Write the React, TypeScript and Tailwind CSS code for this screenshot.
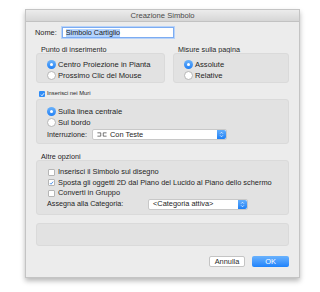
import type { ReactNode } from 'react';

const font = { fontFamily: '"Liberation Sans", Arial, sans-serif' };

function Radio({ checked, label }: { checked?: boolean; label: string }) {
  return (
    <div className="flex h-[11px] items-center gap-[2px]">
      {checked ? (
        <span className="flex h-[9px] w-[9px] items-center justify-center rounded-full bg-gradient-to-b from-[#6cb3fa] to-[#1b7ff5]">
          <span className="h-[3px] w-[3px] rounded-full bg-white" />
        </span>
      ) : (
        <span className="h-[9px] w-[9px] rounded-full border border-[#b5b5b5] bg-white" />
      )}
      <span className="text-[7.6px] leading-none text-[#1e1e1e]">{label}</span>
    </div>
  );
}

function Check({ checked, label }: { checked?: boolean; label: string }) {
  return (
    <div className="flex items-center gap-[3px]">
      <span className="flex h-[7px] w-[7px] items-center justify-center rounded-[1px] border border-[#b5b5b5] bg-white">
        {checked ? (
          <svg viewBox="0 0 8 8" className="h-[6px] w-[6px]">
            <path d="M1.5 4.2 3.2 6 6.6 1.8" fill="none" stroke="#2f7fe8" strokeWidth="1.3" />
          </svg>
        ) : null}
      </span>
      <span className="text-[7.4px] leading-none text-[#1e1e1e]">{label}</span>
    </div>
  );
}

function Select({ width, children }: { width: string; children: ReactNode }) {
  return (
    <div className={`flex h-[11px] items-stretch rounded-[2px] border border-[#c8c8c8] bg-white ${width}`}>
      <div className="flex flex-1 items-center gap-[3px] pl-[4px] text-[7.4px] leading-none text-[#1e1e1e]">{children}</div>
      <div className="flex w-[9px] items-center justify-center rounded-r-[2px] bg-gradient-to-b from-[#62aefc] to-[#1a7ff5]">
        <svg viewBox="0 0 6 9" className="h-[7px] w-[5px]">
          <path d="M1.2 3.4 3 1.6 4.8 3.4M1.2 5.6 3 7.4 4.8 5.6" fill="none" stroke="#fff" strokeWidth="0.9" />
        </svg>
      </div>
    </div>
  );
}

function Box({ className, children }: { className?: string; children?: ReactNode }) {
  return <div className={`rounded-[3px] border border-[#dadada] bg-[#e2e2e2] ${className ?? ''}`}>{children}</div>;
}

export default function App() {
  return (
    <div className="h-[292px] w-[320px] overflow-hidden bg-white pt-[9px]" style={font}>
      <div className="ml-[25px] w-[275px] border border-[#c4c4c4] bg-[#ececec] shadow-[0_3px_5px_rgba(0,0,0,0.28)]">
        <div className="flex h-[12px] items-center justify-center border-b border-[#c2c2c2] bg-gradient-to-b from-[#ececec] to-[#d6d6d6] text-[7.6px] leading-none text-[#4a4a4a]">
          Creazione Simbolo
        </div>

        <div className="px-[10px] pb-[10px]">
          <div className="mt-[5px] flex h-[11px] items-center gap-[5px] -ml-px">
            <span className="text-[7.4px] leading-none text-[#1e1e1e]">Nome:</span>
            <div className="flex h-[11px] w-[112px] items-center border-[1.5px] border-[#7cacf2] bg-white pl-[3px] shadow-[0_0_0_1px_#b7d2f8]">
              <span className="bg-[#b3d3fd] text-[7.2px] leading-[8px] text-[#1e1e1e]">Simbolo Cartiglio</span>
            </div>
          </div>

          <div className="mt-[8px] flex gap-[8px]">
            <div className="flex w-[129px] flex-col">
              <div className="h-[7px] pl-[5px] text-[7.2px] leading-[7px] text-[#1e1e1e]">Punto di inserimento</div>
              <Box className="h-[30px] pl-[10px] pt-[5px]">
                <Radio checked label="Centro Proiezione in Pianta" />
                <Radio label="Prossimo Clic del Mouse" />
              </Box>
            </div>
            <div className="flex flex-1 flex-col">
              <div className="h-[7px] pl-[5px] text-[7.2px] leading-[7px] text-[#1e1e1e]">Misure sulla pagina</div>
              <Box className="h-[30px] pl-[10px] pt-[5px]">
                <Radio checked label="Assolute" />
                <Radio label="Relative" />
              </Box>
            </div>
          </div>

          <div className="mt-[6px] flex h-[10px] items-center pl-[3px]">
            <div className="flex items-center gap-[2px]">
              <span className="flex h-[6px] w-[6px] items-center justify-center rounded-[1px] bg-[#2f8cf6]">
                <svg viewBox="0 0 8 8" className="h-[5px] w-[5px]">
                  <path d="M1.5 4.2 3.2 6 6.6 1.8" fill="none" stroke="#fff" strokeWidth="1.4" />
                </svg>
              </span>
              <span className="text-[5.8px] leading-none text-[#1e1e1e]">Inserisci nei Muri</span>
            </div>
          </div>

          <Box className="h-[45px] pl-[10px] pt-[6px]">
            <Radio checked label="Sulla linea centrale" />
            <Radio label="Sul bordo" />
            <div className="mt-[1px] flex h-[11px] items-center">
              <span className="w-[45px] text-[7.2px] leading-none text-[#1e1e1e]">Interruzione:</span>
              <Select width="w-[135px]">
                <svg viewBox="0 0 12 6" className="h-[5px] w-[10px]">
                  <path d="M0.5 1H4.5V5H0.5M11.5 1H7.5V5H11.5" fill="none" stroke="#333" strokeWidth="0.8" />
                </svg>
                <span>Con Teste</span>
              </Select>
            </div>
          </Box>

          <div className="mt-[9px] h-[7px] pl-[5px] text-[7.2px] leading-[7px] text-[#1e1e1e]">Altre opzioni</div>
          <Box className="h-[55px] pl-[11px] pt-[6px]">
            <div className="flex h-[10px] items-center">
              <Check label="Inserisci il Simbolo sul disegno" />
            </div>
            <div className="flex h-[11px] items-center">
              <Check checked label="Sposta gli oggetti 2D dal Piano del Lucido al Piano dello schermo" />
            </div>
            <div className="flex h-[10px] items-center">
              <Check label="Converti in Gruppo" />
            </div>
            <div className="flex h-[12px] items-center -ml-px">
              <span className="w-[101px] text-[7.2px] leading-none text-[#1e1e1e]">Assegna alla Categoria:</span>
              <Select width="w-[100px]">
                <span>&lt;Categoria attiva&gt;</span>
              </Select>
            </div>
          </Box>

          <Box className="mt-[8px] h-[23px]" />

          <div className="mt-[10px] flex justify-end gap-[7px]">
            <button
              type="button"
              className="flex h-[11px] w-[36px] items-center justify-center rounded-[2px] border border-[#c4c4c4] bg-white text-[7.4px] leading-none text-[#2a2a2a]"
            >
              Annulla
            </button>
            <button
              type="button"
              className="flex h-[11px] w-[37px] items-center justify-center rounded-[2px] bg-gradient-to-b from-[#69b2fd] to-[#1c82fb] text-[7.4px] leading-none text-white"
            >
              OK
            </button>
          </div>
        </div>
      </div>
    </div>
  );
}
